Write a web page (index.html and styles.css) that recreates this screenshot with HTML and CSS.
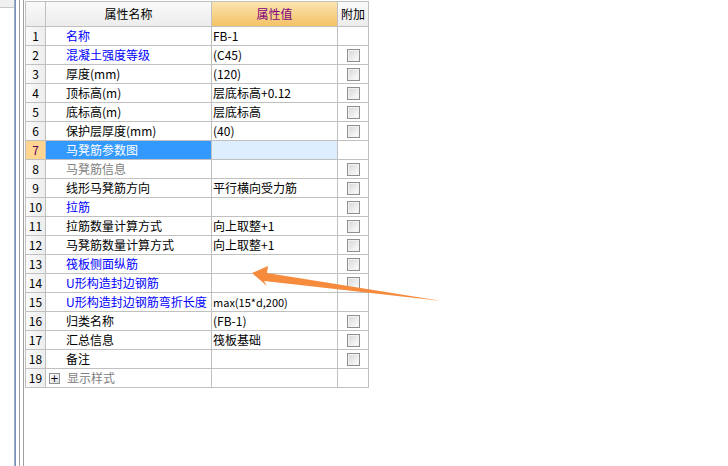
FILE: index.html
```html
<!DOCTYPE html>
<html>
<head>
    <meta charset="utf-8">
    <title>属性编辑</title>
    <link rel="stylesheet" href="styles.css">
</head>
<body>
    <div class="page">
        <div class="side"><div class="side-top"></div></div>
        <div class="splitter"></div>
        <div class="frame">
            <div class="inner">
                <div class="grid">
                    <!-- header -->
                    <div class="cell head num-head"></div>
                    <div class="cell head name-head">属性名称</div>
                    <div class="cell head val-head">属性值</div>
                    <div class="cell head extra-head">附加</div>

                    <div class="cell num">1</div>
                    <div class="cell name blue">名称</div>
                    <div class="cell val">FB-1</div>
                    <div class="cell extra"></div>

                    <div class="cell num">2</div>
                    <div class="cell name blue">混凝土强度等级</div>
                    <div class="cell val">(C45)</div>
                    <div class="cell extra"><span class="check"></span></div>

                    <div class="cell num">3</div>
                    <div class="cell name">厚度(mm)</div>
                    <div class="cell val">(120)</div>
                    <div class="cell extra"><span class="check"></span></div>

                    <div class="cell num">4</div>
                    <div class="cell name">顶标高(m)</div>
                    <div class="cell val">层底标高+0.12</div>
                    <div class="cell extra"><span class="check"></span></div>

                    <div class="cell num">5</div>
                    <div class="cell name">底标高(m)</div>
                    <div class="cell val">层底标高</div>
                    <div class="cell extra"><span class="check"></span></div>

                    <div class="cell num">6</div>
                    <div class="cell name">保护层厚度(mm)</div>
                    <div class="cell val">(40)</div>
                    <div class="cell extra"><span class="check"></span></div>

                    <div class="cell num sel-num">7</div>
                    <div class="cell name sel-name">马凳筋参数图</div>
                    <div class="cell val sel-val"></div>
                    <div class="cell extra"></div>

                    <div class="cell num">8</div>
                    <div class="cell name gray">马凳筋信息</div>
                    <div class="cell val"></div>
                    <div class="cell extra"><span class="check"></span></div>

                    <div class="cell num">9</div>
                    <div class="cell name">线形马凳筋方向</div>
                    <div class="cell val">平行横向受力筋</div>
                    <div class="cell extra"><span class="check"></span></div>

                    <div class="cell num">10</div>
                    <div class="cell name blue">拉筋</div>
                    <div class="cell val"></div>
                    <div class="cell extra"><span class="check"></span></div>

                    <div class="cell num">11</div>
                    <div class="cell name">拉筋数量计算方式</div>
                    <div class="cell val">向上取整+1</div>
                    <div class="cell extra"><span class="check"></span></div>

                    <div class="cell num">12</div>
                    <div class="cell name">马凳筋数量计算方式</div>
                    <div class="cell val">向上取整+1</div>
                    <div class="cell extra"><span class="check"></span></div>

                    <div class="cell num">13</div>
                    <div class="cell name blue">筏板侧面纵筋</div>
                    <div class="cell val"></div>
                    <div class="cell extra"><span class="check"></span></div>

                    <div class="cell num">14</div>
                    <div class="cell name blue">U形构造封边钢筋</div>
                    <div class="cell val"></div>
                    <div class="cell extra"><span class="check"></span></div>

                    <div class="cell num">15</div>
                    <div class="cell name blue">U形构造封边钢筋弯折长度</div>
                    <div class="cell val small">max(15*d,200)</div>
                    <div class="cell extra"></div>

                    <div class="cell num">16</div>
                    <div class="cell name">归类名称</div>
                    <div class="cell val">(FB-1)</div>
                    <div class="cell extra"><span class="check"></span></div>

                    <div class="cell num">17</div>
                    <div class="cell name">汇总信息</div>
                    <div class="cell val">筏板基础</div>
                    <div class="cell extra"><span class="check"></span></div>

                    <div class="cell num">18</div>
                    <div class="cell name">备注</div>
                    <div class="cell val"></div>
                    <div class="cell extra"><span class="check"></span></div>

                    <div class="cell num">19</div>
                    <div class="cell name gray group"><span class="expander">+</span>显示样式</div>
                    <div class="cell val"></div>
                    <div class="cell extra"></div>
                </div>
            </div>
        </div>

        <!-- annotation arrow drawn over the grid -->
        <svg class="arrow" width="728" height="466" viewBox="0 0 728 466">
            <polygon points="252,273 268,266 267,273 442,301 264,281 267,286" fill="#f68a3d"/>
        </svg>
    </div>
</body>
</html>
```

FILE: styles.css
```css
:root {
    --grid-line: #c0c0c0;
    --blue-text: #0000ff;
    --gray-text: #808080;
}

body {
    margin: 0;
    background: #ffffff;
    font-family: "Noto Sans CJK SC", "Liberation Sans", sans-serif;
    font-size: 12px;
    color: #000000;
}

.page {
    position: relative;
    width: 728px;
    height: 466px;
    overflow: hidden;
    display: flex;
}

.side {
    width: 14px;
    flex-shrink: 0;
}

.side-top {
    height: 7px;
    background: #f0f0f0;
    border-bottom: 1px solid #c8c8c8;
}

.splitter {
    width: 2px;
    flex-shrink: 0;
    background: #9aaecb;
    box-shadow: inset -1px 0 0 #7d93b3;
}

.frame {
    margin-left: 3px;
    border-left: 1px solid #a0a0a0;
    padding-left: 3px;
    flex-grow: 1;
}

.inner {
    border-left: 1px solid #a0a0a0;
    padding-left: 1px;
    padding-top: 1px;
    height: 100%;
    box-sizing: border-box;
}

.grid {
    display: grid;
    grid-template-columns: 20px 166px 126px 31px;
    grid-template-rows: 25px;
    grid-auto-rows: 19px;
    width: 343px;
    border-left: 1px solid var(--grid-line);
    border-top: 1px solid var(--grid-line);
}

.cell {
    box-sizing: border-box;
    border-right: 1px solid var(--grid-line);
    border-bottom: 1px solid var(--grid-line);
    line-height: 18px;
    white-space: nowrap;
    overflow: hidden;
}

.head {
    line-height: 24px;
    text-align: center;
    background: linear-gradient(#fafafa, #ececec);
}

.val-head {
    background: linear-gradient(#fce4ae, #f3c266);
    color: #800080;
}

.num {
    text-align: center;
    background: linear-gradient(90deg, #fbfbfb, #ededed);
}

.name {
    padding-left: 20px;
}

.val {
    padding-left: 1px;
}

.val.small {
    font-size: 11px;
}

.extra {
    display: flex;
    align-items: center;
    justify-content: center;
    padding-left: 1px;
}

.blue {
    color: var(--blue-text);
}

.gray {
    color: var(--gray-text);
}

.sel-num {
    background: #ffd591;
    color: #5a005a;
}

.sel-name {
    background: #3399ff;
    color: #ffffff;
}

.sel-val {
    background: #ddeeff;
}

.check {
    width: 11px;
    height: 11px;
    border: 1px solid #8e8f8f;
    background: linear-gradient(135deg, #d6d6d6, #ffffff);
    box-shadow: inset 0 0 0 1px #f2f2f2;
}

.group {
    padding-left: 3px;
    display: flex;
    align-items: center;
}

.expander {
    width: 9px;
    height: 9px;
    border: 1px solid #909090;
    background: linear-gradient(135deg, #ffffff, #dcdcdc);
    color: #000000;
    font-family: "DejaVu Sans", sans-serif;
    font-size: 10px;
    line-height: 9px;
    text-align: center;
    margin-right: 7px;
}

.arrow {
    position: absolute;
    left: 0;
    top: 0;
    pointer-events: none;
}
```
